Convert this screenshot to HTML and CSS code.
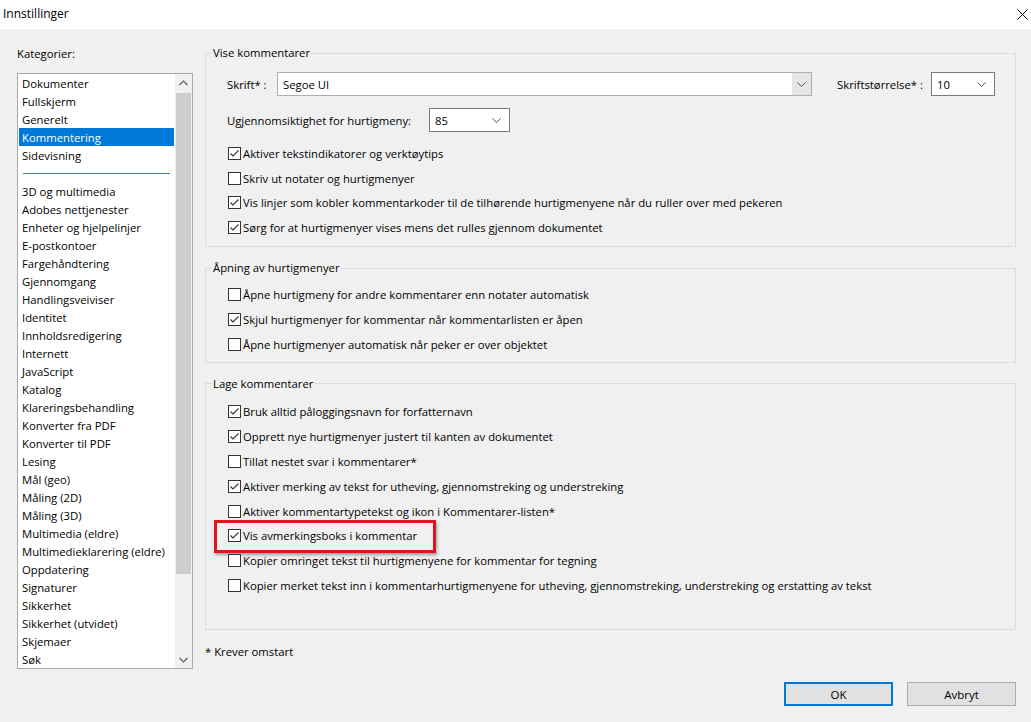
FILE: index.html
```html
<!DOCTYPE html>
<html lang="no">
<head>
<meta charset="utf-8">
<title>Innstillinger</title>
<link rel="stylesheet" href="styles.css">
</head>
<body>
<div class="titlebar">
  <span class="title">Innstillinger</span>
  <svg class="close" width="11" height="11" viewBox="0 0 11 11"><path d="M0.5 0.5L10.5 10.5M10.5 0.5L0.5 10.5" stroke="#000" stroke-width="1" fill="none"/></svg>
</div>
<div class="main">
  <div class="leftcol">
    <div class="catlabel">Kategorier:</div>
    <div class="listbox">
      <ul class="items">
        <li>Dokumenter</li>
        <li>Fullskjerm</li>
        <li>Generelt</li>
        <li class="sel">Kommentering</li>
        <li>Sidevisning</li>
        <li class="sep"><span></span></li>
        <li>3D og multimedia</li>
        <li>Adobes nettjenester</li>
        <li>Enheter og hjelpelinjer</li>
        <li>E-postkontoer</li>
        <li>Fargehåndtering</li>
        <li>Gjennomgang</li>
        <li>Handlingsveiviser</li>
        <li>Identitet</li>
        <li>Innholdsredigering</li>
        <li>Internett</li>
        <li>JavaScript</li>
        <li>Katalog</li>
        <li>Klareringsbehandling</li>
        <li>Konverter fra PDF</li>
        <li>Konverter til PDF</li>
        <li>Lesing</li>
        <li>Mål (geo)</li>
        <li>Måling (2D)</li>
        <li>Måling (3D)</li>
        <li>Multimedia (eldre)</li>
        <li>Multimedieklarering (eldre)</li>
        <li>Oppdatering</li>
        <li>Signaturer</li>
        <li>Sikkerhet</li>
        <li>Sikkerhet (utvidet)</li>
        <li>Skjemaer</li>
        <li>Søk</li>
      </ul>
      <div class="scrollbar">
        <div class="sbtn"><svg width="9" height="6" viewBox="0 0 9 6"><path d="M0.5 5L4.5 1L8.5 5" stroke="#606060" stroke-width="1.2" fill="none"/></svg></div>
        <div class="track"><div class="thumb"></div></div>
        <div class="sbtn"><svg width="9" height="6" viewBox="0 0 9 6"><path d="M0.5 1L4.5 5L8.5 1" stroke="#606060" stroke-width="1.2" fill="none"/></svg></div>
      </div>
    </div>
  </div>
  <div class="rightcol">
    <fieldset class="group g1">
      <legend>Vise kommentarer</legend>
      <div class="row font-row">
        <span class="lbl lbl-font">Skrift* :</span>
        <div class="combo combo-font">
          <span class="val">Segoe UI</span>
          <span class="dropbtn"><svg width="9" height="5" viewBox="0 0 9 5"><path d="M0.5 0.5L4.5 4.5L8.5 0.5" stroke="#555" stroke-width="1" fill="none"/></svg></span>
        </div>
        <span class="lbl lbl-size">Skriftstørrelse* :</span>
        <div class="combo combo-size">
          <span class="val">10</span>
          <svg width="9" height="5" viewBox="0 0 9 5"><path d="M0.5 0.5L4.5 4.5L8.5 0.5" stroke="#555" stroke-width="1" fill="none"/></svg>
        </div>
      </div>
      <div class="row opac-row">
        <span class="lbl lbl-opac">Ugjennomsiktighet for hurtigmeny:</span>
        <div class="combo combo-opac">
          <span class="val">85</span>
          <svg width="9" height="5" viewBox="0 0 9 5"><path d="M0.5 0.5L4.5 4.5L8.5 0.5" stroke="#555" stroke-width="1" fill="none"/></svg>
        </div>
      </div>
      <div class="checks first">
        <div class="chk on"><span class="box"></span>Aktiver tekstindikatorer og verktøytips</div>
        <div class="chk"><span class="box"></span>Skriv ut notater og hurtigmenyer</div>
        <div class="chk on"><span class="box"></span>Vis linjer som kobler kommentarkoder til de tilhørende hurtigmenyene når du ruller over med pekeren</div>
        <div class="chk on"><span class="box"></span>Sørg for at hurtigmenyer vises mens det rulles gjennom dokumentet</div>
      </div>
    </fieldset>
    <fieldset class="group g2">
      <legend>Åpning av hurtigmenyer</legend>
      <div class="checks">
        <div class="chk"><span class="box"></span>Åpne hurtigmeny for andre kommentarer enn notater automatisk</div>
        <div class="chk on"><span class="box"></span>Skjul hurtigmenyer for kommentar når kommentarlisten er åpen</div>
        <div class="chk"><span class="box"></span>Åpne hurtigmenyer automatisk når peker er over objektet</div>
      </div>
    </fieldset>
    <fieldset class="group g3">
      <legend>Lage kommentarer</legend>
      <div class="checks">
        <div class="chk on"><span class="box"></span>Bruk alltid påloggingsnavn for forfatternavn</div>
        <div class="chk on"><span class="box"></span>Opprett nye hurtigmenyer justert til kanten av dokumentet</div>
        <div class="chk"><span class="box"></span>Tillat nestet svar i kommentarer*</div>
        <div class="chk on"><span class="box"></span>Aktiver merking av tekst for utheving, gjennomstreking og understreking</div>
        <div class="chk"><span class="box"></span>Aktiver kommentartypetekst og ikon i Kommentarer-listen*</div>
        <div class="chk on highlight"><span class="box"></span>Vis avmerkingsboks i kommentar<span class="redbox"></span></div>
        <div class="chk"><span class="box"></span>Kopier omringet tekst til hurtigmenyene for kommentar for tegning</div>
        <div class="chk"><span class="box"></span>Kopier merket tekst inn i kommentarhurtigmenyene for utheving, gjennomstreking, understreking og erstatting av tekst</div>
      </div>
    </fieldset>
    <div class="note">* Krever omstart</div>
  </div>
</div>
<div class="buttons">
  <button class="btn btn-ok">OK</button>
  <button class="btn">Avbryt</button>
</div>
</body>
</html>
```

FILE: styles.css
```css
* { box-sizing: border-box; }
html, body { margin: 0; padding: 0; }
body {
  width: 1031px;
  height: 722px;
  background: #f0f0f0;
  font-family: "Open Sans", "Noto Sans", "Liberation Sans", sans-serif;
  font-size: 11.3px;
  color: #000;
  overflow: hidden;
}
.titlebar {
  height: 29px;
  background: #fff;
  display: flex;
  align-items: center;
  justify-content: space-between;
  padding: 0 2px 1px 3px;
}
.title { font-size: 12px; line-height: 16px; }
.close { margin-right: 1px; }

.main {
  display: flex;
  padding: 16px 15px 0 17px;
  gap: 12px;
}
.leftcol { width: 176px; flex: none; }
.catlabel { line-height: 16px; height: 16px; padding-top: 1px; }
.listbox {
  margin-top: 12px;
  height: 596px;
  border: 1px solid #a9a9a9;
  background: #fff;
  display: flex;
  padding-left: 1px;
}
.items {
  list-style: none;
  margin: 0;
  padding: 0;
  width: 156px;
  flex: none;
}
.items li {
  height: 18px;
  line-height: 19px;
  padding-left: 3px;
  white-space: nowrap;
  overflow: hidden;
}
.items li.sel {
  background: #0078d7;
  color: #fff;
  width: 155px;
}
.items li.sep { display: flex; align-items: center; padding: 0 5px 0 4px; }
.items li.sep span { display: block; height: 1px; width: 100%; background: #3d7fb4; margin-top: 1px; }

.scrollbar {
  width: 17px;
  flex: none;
  display: flex;
  flex-direction: column;
  background: #f0f0f0;
}
.sbtn {
  height: 17px;
  display: flex;
  align-items: center;
  justify-content: center;
  flex: none;
}
.track { flex: 1; padding-top: 2px; }
.thumb {
  margin: 0 1px;
  height: 481px;
  background: #cdcdcd;
}

.rightcol { width: 811px; flex: none; }
.group {
  margin: 0;
  border: 1px solid #dcdcdc;
  padding: 0 20px 6px 21px;
  min-inline-size: 0;
}
.group legend {
  padding: 0 1px;
  margin-left: -15px;
  line-height: 16px;
  height: 16px;
}
.g2 { margin-top: 13px; padding-top: 6px; padding-bottom: 5px; }
.g3 { margin-top: 13px; padding-top: 8px; padding-bottom: 31.5px; }

.row { display: flex; align-items: center; height: 24px; }
.font-row { margin-top: 11px; }
.opac-row { margin-top: 12px; }
.lbl { white-space: nowrap; }
.lbl-font { width: 50px; flex: none; }
.lbl-size { width: 94px; flex: none; margin-left: 25px; }
.lbl-opac { width: 202px; flex: none; }
.combo {
  height: 24px;
  background: #fff;
  border: 1px solid #7a7a7a;
  display: flex;
  align-items: center;
  justify-content: space-between;
  padding: 0 8px 0 5px;
}
.combo-font {
  flex: 1;
  border-color: #adadad;
  padding-right: 0;
}
.dropbtn {
  width: 19px;
  height: 22px;
  background: #e5e5e5;
  display: flex;
  align-items: center;
  justify-content: center;
}
.combo-size { width: 64px; flex: none; }
.combo-opac { width: 81px; flex: none; }

.checks.first { margin-top: 9px; }
.chk {
  position: relative;
  height: 24.8px;
  display: flex;
  align-items: center;
  white-space: nowrap;
  padding-left: 1px;
}
.box {
  width: 13px;
  height: 13px;
  border: 1px solid #333;
  background: #fff;
  margin-right: 2px;
  flex: none;
}
.chk.on .box {
  background: #fff url("data:image/svg+xml,%3Csvg xmlns='http://www.w3.org/2000/svg' width='11' height='11' viewBox='0 0 11 11'%3E%3Cpath d='M1.5 5.5L4 8L9.5 2.5' stroke='%23333' stroke-width='1.1' fill='none'/%3E%3C/svg%3E") center / 11px 11px no-repeat;
}
.redbox {
  position: absolute;
  left: -13px;
  top: -3.5px;
  width: 222px;
  height: 33px;
  border: 3px solid #e0151d;
  box-shadow: 1px 2px 3px rgba(0,0,0,0.35);
  pointer-events: none;
}

.note { margin-top: 13px; line-height: 18px; }

.buttons {
  display: flex;
  justify-content: flex-end;
  gap: 14px;
  padding-right: 15px;
  margin-top: 13px;
}
.btn {
  width: 109px;
  height: 24px;
  background: #e1e1e1;
  border: 1px solid #adadad;
  font-family: inherit;
  font-size: 11.5px;
  padding: 0;
  color: #000;
}
.btn-ok { border: 2px solid #0078d7; }
```
